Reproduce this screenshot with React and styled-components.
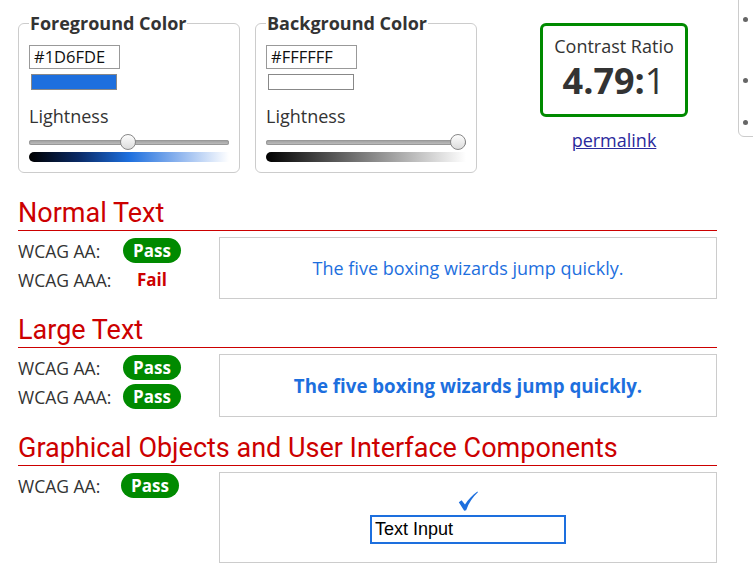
import React from "react";
import styled, { createGlobalStyle } from "styled-components";

const Global = createGlobalStyle`
  html, body { margin: 0; padding: 0; background: #fff; }
  body { font-family: "Open Sans", "Liberation Sans", sans-serif; color: #333; font-size: 17px; overflow: hidden; }
`;

const Page = styled.div`
  position: relative;
  width: 753px;
  height: 584px;
  overflow: hidden;
  padding-top: 11px;
  box-sizing: border-box;
`;

const TopRow = styled.div`
  display: flex;
  gap: 15px;
  padding: 0 17px 0 18px;
`;

const Fieldset = styled.fieldset`
  margin: 0;
  width: 222px;
  box-sizing: border-box;
  border: 1px solid #ccc;
  border-radius: 6px;
  padding: 10px 10px 10px 10px;
  min-width: 0;
`;

const Legend = styled.legend`
  font-weight: 700;
  font-size: 18px;
  line-height: 24px;
  padding: 0 1px;
  color: #333;
`;

const HexInput = styled.div`
  width: 91px;
  height: 24px;
  box-sizing: border-box;
  border: 1px solid #999;
  font-size: 16.5px;
  line-height: 22px;
  padding-left: 4px;
  color: #111;
`;

const Swatch = styled.div`
  width: 86px;
  height: 16px;
  box-sizing: border-box;
  margin: 5px 0 0 2px;
  border: 1px solid #888;
  background: ${(p) => p.$color};
`;

const Label = styled.div`
  margin-top: 14px;
  font-size: 18px;
  line-height: 24px;
  color: #333;
`;

const Slider = styled.div`
  position: relative;
  margin-top: 12px;
  height: 5px;
  width: 200px;
  border-radius: 3px;
  background: linear-gradient(#9a9a9a, #c4c4c4);
  box-shadow: inset 0 0 0 1px #999;
`;

const Thumb = styled.div`
  position: absolute;
  top: -6px;
  width: 16px;
  height: 16px;
  box-sizing: border-box;
  border-radius: 50%;
  border: 1px solid #888;
  background: linear-gradient(#fdfdfd, #dcdcdc);
`;

const Ramp = styled.div`
  margin-top: 7px;
  height: 10px;
  width: 200px;
  border-radius: 5px 0 0 5px;
  background: ${(p) => p.$ramp};
`;

const ResultCol = styled.div`
  flex: 1;
  display: flex;
  flex-direction: column;
  align-items: center;
  padding-top: 12px;
`;

const RatioBox = styled.div`
  width: 148px;
  height: 94px;
  box-sizing: border-box;
  border: 3px solid #008a00;
  border-radius: 6px;
  text-align: center;
  padding-top: 9px;
`;

const RatioLabel = styled.div`
  font-size: 18px;
  line-height: 22px;
  color: #333;
`;

const RatioValue = styled.div`
  font-size: 36px;
  line-height: 48px;
  font-weight: 700;
  color: #333;
`;

const RatioOne = styled.span`
  font-weight: 400;
`;

const Permalink = styled.a`
  margin-top: 11px;
  font-size: 18px;
  line-height: 24px;
  color: #2a2a9c;
  text-decoration: underline;
`;

const Sections = styled.div`
  padding: 25px 36px 0 18px;
`;

const Section = styled.section`
  & + & { margin-top: 16px; }
`;

const Heading = styled.h2`
  margin: 0;
  font-family: Roboto, "Liberation Sans", sans-serif;
  font-weight: 400;
  font-size: 27px;
  line-height: 30px;
  color: #cc0000;
  padding-bottom: 2px;
  border-bottom: 1px solid #cc0000;
`;

const Body = styled.div`
  display: grid;
  grid-template-columns: 201px 1fr;
  margin-top: 6px;
`;

const Rows = styled.div`
  display: flex;
  flex-direction: column;
  gap: 4px;
  padding-top: 1px;
`;

const Row = styled.div`
  display: flex;
  align-items: center;
  height: 25px;
`;

const RowLabel = styled.span`
  width: ${(p) => p.$w || 105}px;
  font-size: 17.5px;
  color: #333;
`;

const Badge = styled.span`
  width: 58px;
  height: 25px;
  border-radius: 13px;
  background: ${(p) => (p.$pass ? "#008a00" : "transparent")};
  color: ${(p) => (p.$pass ? "#fff" : "#cc0000")};
  font-weight: 700;
  font-size: 17px;
  line-height: 25px;
  text-align: center;
`;

const Sample = styled.div`
  height: ${(p) => p.$h}px;
  box-sizing: border-box;
  border: 1px solid #ccc;
  display: flex;
  flex-direction: column;
  align-items: center;
  justify-content: center;
  color: #1d6fde;
  font-size: ${(p) => (p.$large ? "18.7px" : "18px")};
  font-weight: ${(p) => (p.$large ? 700 : 400)};
`;

const Check = styled.svg`
  display: block;
  width: 20px;
  height: 20px;
  margin-bottom: 4px;
`;

const TextInput = styled.div`
  width: 196px;
  height: 29px;
  box-sizing: border-box;
  border: 2px solid #1d6fde;
  font-family: "Liberation Sans", Arial, sans-serif;
  font-size: 18px;
  line-height: 25px;
  color: #000;
  padding-left: 3px;
`;

const SidePanel = styled.div`
  position: absolute;
  top: -1px;
  left: 738px;
  width: 30px;
  height: 138px;
  box-sizing: border-box;
  border: 1px solid #ccc;
  border-radius: 0 0 0 6px;
  background: #fff;
`;

const Dot = styled.span`
  position: absolute;
  left: 4px;
  top: ${(p) => p.$y}px;
  width: 5px;
  height: 5px;
  border-radius: 50%;
  background: #666;
`;

function ColorPicker({ title, hex, swatch, pos, ramp }) {
  return (
    <Fieldset>
      <Legend>{title}</Legend>
      <HexInput>{hex}</HexInput>
      <Swatch $color={swatch} />
      <Label>Lightness</Label>
      <Slider>
        <Thumb style={{ left: `${pos}px` }} />
      </Slider>
      <Ramp $ramp={ramp} />
    </Fieldset>
  );
}

export default function App() {
  return (
    <Page>
      <Global />
      <TopRow>
        <ColorPicker
          title="Foreground Color"
          hex="#1D6FDE"
          swatch="#1d6fde"
          pos={91}
          ramp="linear-gradient(to right, #000 0%, #0a2a66 25%, #1d6fde 50%, #8fb5ee 75%, #fff 100%)"
        />
        <ColorPicker
          title="Background Color"
          hex="#FFFFFF"
          swatch="#fff"
          pos={184}
          ramp="linear-gradient(to right, #000 0%, #fff 100%)"
        />
        <ResultCol>
          <RatioBox>
            <RatioLabel>Contrast Ratio</RatioLabel>
            <RatioValue>
              4.79:<RatioOne>1</RatioOne>
            </RatioValue>
          </RatioBox>
          <Permalink href="#">permalink</Permalink>
        </ResultCol>
      </TopRow>

      <Sections>
        <Section>
          <Heading>Normal Text</Heading>
          <Body>
            <Rows>
              <Row>
                <RowLabel>WCAG AA:</RowLabel>
                <Badge $pass>Pass</Badge>
              </Row>
              <Row>
                <RowLabel>WCAG AAA:</RowLabel>
                <Badge>Fail</Badge>
              </Row>
            </Rows>
            <Sample $h={62}>The five boxing wizards jump quickly.</Sample>
          </Body>
        </Section>
        <Section>
          <Heading>Large Text</Heading>
          <Body>
            <Rows>
              <Row>
                <RowLabel>WCAG AA:</RowLabel>
                <Badge $pass>Pass</Badge>
              </Row>
              <Row>
                <RowLabel>WCAG AAA:</RowLabel>
                <Badge $pass>Pass</Badge>
              </Row>
            </Rows>
            <Sample $h={63} $large>The five boxing wizards jump quickly.</Sample>
          </Body>
        </Section>
        <Section>
          <Heading>Graphical Objects and User Interface Components</Heading>
          <Body>
            <Rows>
              <Row>
                <RowLabel $w={103}>WCAG AA:</RowLabel>
                <Badge $pass>Pass</Badge>
              </Row>
            </Rows>
            <Sample $h={91}>
              <Check viewBox="0 0 20 20">
                <path
                  d="M0.8 11.2 L3.6 9.2 L7 13.6 C10 8.6 14 4.2 19.4 0.4 L19.9 1.3 C14.6 6.2 10.8 12 8.2 19.2 L6.2 19.8 Z"
                  fill="#1d6fde"
                />
              </Check>
              <TextInput>Text Input</TextInput>
            </Sample>
          </Body>
        </Section>
      </Sections>

      <SidePanel>
        <Dot $y={17} />
        <Dot $y={78} />
        <Dot $y={120} />
      </SidePanel>
    </Page>
  );
}
